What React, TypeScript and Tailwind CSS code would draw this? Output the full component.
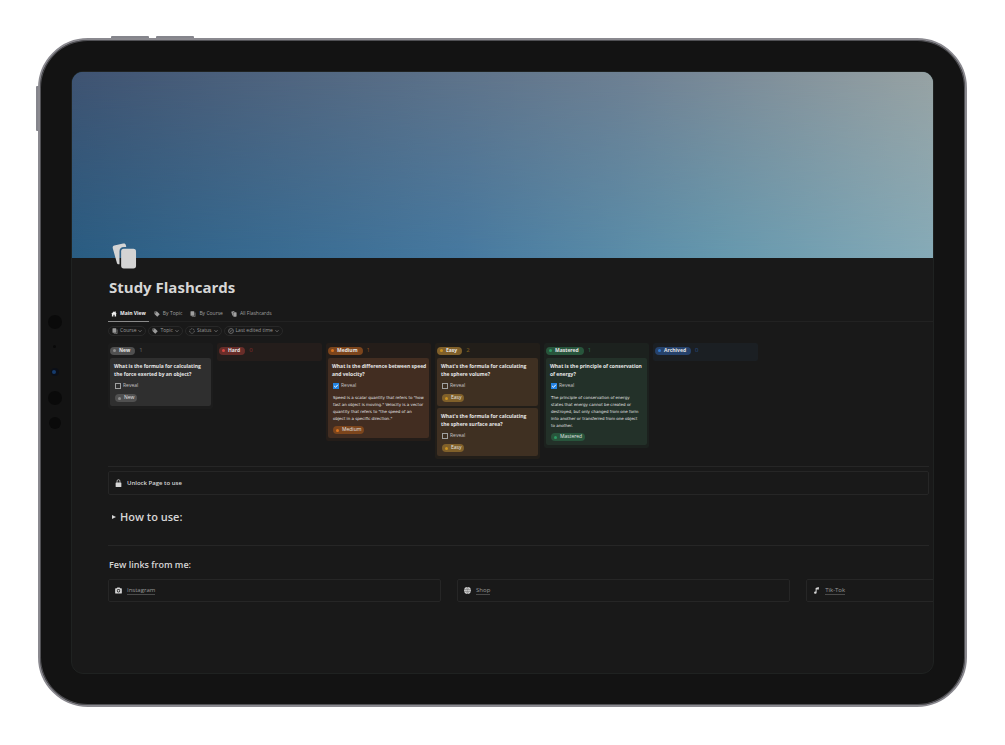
import { useState } from 'react';
import type { ReactNode } from 'react';

type IconProps = { className?: string };

function CardsIcon({ className }: IconProps) {
  return (
    <svg viewBox="0 0 26 28" className={className} fill="currentColor" aria-hidden="true">
      <path d="M2.400 2.600 11.600.6c1.500-.4 2.500.2 2.800 1.500l.4 2.100h-2.300C9.300 4.200 7.800 6 7.800 8.700V22c-1.700.4-2.600-.4-2.900-2.100L.8 5.500c-.3-1.500.2-2.500 1.600-2.900Z" />
      <rect x="9.500" y="6" width="15.500" height="20.500" rx="2.800" />
    </svg>
  );
}

function HomeIcon({ className }: IconProps) {
  return (
    <svg viewBox="0 0 12 12" className={className} fill="currentColor" aria-hidden="true">
      <path d="M6 .6.4 5.800h1.400v5.400h3V7.500h2.400v3.700h3V5.800h1.400L9.600 3.900V1.200H8v1.300Z" />
    </svg>
  );
}

function TagIcon({ className }: IconProps) {
  return (
    <svg viewBox="0 0 12 12" className={className} fill="currentColor" aria-hidden="true">
      <path fillRule="evenodd" d="M1 1h5l5.500 5.500-5 5L1 6Zm2.300 1.300a1 1 0 1 0 0 2 1 1 0 0 0 0-2Z" />
    </svg>
  );
}

function PagesIcon({ className }: IconProps) {
  return (
    <svg viewBox="0 0 12 12" className={className} fill="currentColor" aria-hidden="true">
      <rect x="1" y=".5" width="7.500" height="9" rx="1" />
      <path d="M9.500 3h1.200v8.500H3.500v-1.200h6Z" />
    </svg>
  );
}

function StatusIcon({ className }: IconProps) {
  return (
    <svg viewBox="0 0 12 12" className={className} fill="none" stroke="currentColor" strokeWidth="1.300" aria-hidden="true">
      <circle cx="6" cy="6" r="4.600" strokeDasharray="2.200 1.400" />
    </svg>
  );
}

function ClockIcon({ className }: IconProps) {
  return (
    <svg viewBox="0 0 12 12" className={className} fill="none" stroke="currentColor" strokeWidth="1.200" aria-hidden="true">
      <circle cx="6" cy="6" r="4.900" />
      <path d="M3.500 5.500 6 7l2.500-3" />
    </svg>
  );
}

function LockIcon({ className }: IconProps) {
  return (
    <svg viewBox="0 0 12 14" className={className} fill="currentColor" aria-hidden="true">
      <rect x="1" y="6" width="10" height="8" rx="1" />
      <path d="M3.500 6.500V3.600a2.500 2.500 0 0 1 5 0v2.900" fill="none" stroke="currentColor" strokeWidth="1.300" />
    </svg>
  );
}

function CameraIcon({ className }: IconProps) {
  return (
    <svg viewBox="0 0 12 12" className={className} fill="currentColor" aria-hidden="true">
      <path fillRule="evenodd" d="M4 .8h4l.8 1.400h1.900c.6 0 1 .4 1 1v7c0 .6-.4 1-1 1H1.300c-.6 0-1-.4-1-1v-7c0-.6.4-1 1-1h1.900ZM6 3.500a3 3 0 1 0 0 6 3 3 0 0 0 0-6Z" />
      <circle cx="6" cy="6.500" r="1.700" />
    </svg>
  );
}

function GlobeIcon({ className }: IconProps) {
  return (
    <svg viewBox="0 0 12 12" className={className} aria-hidden="true">
      <circle cx="6" cy="6" r="5.800" fill="currentColor" />
      <path d="M0 4.300h12M0 7.700h12M6 0v12M6 .3c-3.500 3-3.500 8.400 0 11.400 3.500-3 3.500-8.400 0-11.400Z" fill="none" stroke="#191919" strokeWidth=".4" />
    </svg>
  );
}

function NoteIcon({ className }: IconProps) {
  return (
    <svg viewBox="0 0 12 12" className={className} fill="currentColor" aria-hidden="true">
      <path d="M4.500 1.500 10 .2v3L6.200 4.200v5.500a2.200 2 0 1 1-1.700-2Z" />
      <circle cx="8.700" cy="3.500" r="1.300" />
    </svg>
  );
}

function ChevronIcon({ className }: IconProps) {
  return (
    <svg viewBox="0 0 8 8" className={className} fill="none" stroke="currentColor" strokeWidth="1.300" aria-hidden="true">
      <path d="m1 2.500 3 3 3-3" />
    </svg>
  );
}

type Tone = { column: string; card: string; pill: string; dot: string; count: string };

const tones: Record<string, Tone> = {
  New: { column: 'bg-[#1c1c1c]', card: 'bg-[#2f2f2f]', pill: 'bg-[#505050]', dot: 'bg-[#8c8c8c]', count: 'text-[#6a6a6a]' },
  Hard: { column: 'bg-[#241d1b]', card: 'bg-[#3e2825]', pill: 'bg-[#682d29]', dot: 'bg-[#d3453f]', count: 'text-[#8d2c29]' },
  Medium: { column: 'bg-[#241d19]', card: 'bg-[#422d21]', pill: 'bg-[#7c451c]', dot: 'bg-[#d9731f]', count: 'text-[#8c4f20]' },
  Easy: { column: 'bg-[#221e19]', card: 'bg-[#3f3022]', pill: 'bg-[#80602a]', dot: 'bg-[#ca9221]', count: 'text-[#886620]' },
  Mastered: { column: 'bg-[#1c211e]', card: 'bg-[#233129]', pill: 'bg-[#28553c]', dot: 'bg-[#2e9a64]', count: 'text-[#286c4a]' },
  Archived: { column: 'bg-[#1b1f23]', card: 'bg-[#1e2c3c]', pill: 'bg-[#26426b]', dot: 'bg-[#3279cc]', count: 'text-[#264f8a]' },
};

type Flashcard = { id: string; question: string; answer?: string };

const columns: { name: string; cards: Flashcard[] }[] = [
  { name: 'New', cards: [{ id: 'force', question: 'What is the formula for calculating\nthe force exerted by an object?' }] },
  { name: 'Hard', cards: [] },
  {
    name: 'Medium',
    cards: [
      {
        id: 'velocity',
        question: 'What is the difference between speed\nand velocity?',
        answer:
          'Speed is a scalar quantity that refers to "how\nfast an object is moving." Velocity is a vector\nquantity that refers to "the speed of an\nobject in a specific direction."',
      },
    ],
  },
  {
    name: 'Easy',
    cards: [
      { id: 'volume', question: "What's the formula for calculating\nthe sphere volume?" },
      { id: 'area', question: "What's the formula for calculating\nthe sphere surface area?" },
    ],
  },
  {
    name: 'Mastered',
    cards: [
      {
        id: 'energy',
        question: 'What is the principle of conservation\nof energy?',
        answer:
          'The principle of conservation of energy\nstates that energy cannot be created or\ndestroyed, but only changed from one form\ninto another or transferred from one object\nto another.',
      },
    ],
  },
  { name: 'Archived', cards: [] },
];

function StatusPill({ name, small }: { name: string; small?: boolean }) {
  const tone = tones[name];
  return (
    <span
      className={`inline-flex h-2 items-center gap-[3px] rounded-full pl-[3px] text-[5px] text-[#e4e4e4] ${tone.pill} ${
        small ? 'pr-[3px]' : 'pr-[5px] font-bold'
      }`}
    >
      <span className={`size-[3px] rounded-full ${tone.dot}`} />
      {name}
    </span>
  );
}

function FlashcardItem({ card, status }: { card: Flashcard; status: string }) {
  const [revealed, setRevealed] = useState(Boolean(card.answer));
  return (
    <article className={`flex flex-col items-start rounded-[2px] pt-1 pr-[2px] pb-1 pl-1 ${tones[status].card}`}>
      <h3 className="text-[5px] leading-[8px] font-bold whitespace-pre-line text-[#e6e6e6]">{card.question}</h3>
      <label className="mt-1 flex h-2 items-center gap-[2px] pl-px text-[5px] text-[#c4c4c4]">
        <span className="relative flex">
          <input
            type="checkbox"
            checked={revealed}
            onChange={(e) => setRevealed(e.target.checked)}
            className="peer size-[6px] appearance-none border border-[#a0a0a0] checked:border-[#2383e2] checked:bg-[#2383e2]"
          />
          <svg viewBox="0 0 6 6" className="pointer-events-none absolute inset-0 hidden size-[6px] peer-checked:block" fill="none" stroke="#fff" strokeWidth="1">
            <path d="m1.200 3 1.300 1.300L4.900 1.700" />
          </svg>
        </span>
        Reveal
      </label>
      {revealed && card.answer && (
        <p className="mt-1 pl-px font-['DejaVu_Sans',sans-serif] text-[4px] leading-[7px] whitespace-pre text-[#e6e6e6]">
          {card.answer}
        </p>
      )}
      <div className="mt-1 flex h-2 items-center pl-px">
        <StatusPill name={status} small />
      </div>
    </article>
  );
}

const tabs: { label: string; icon: ReactNode }[] = [
  { label: 'Main View', icon: <HomeIcon className="size-[6px]" /> },
  { label: 'By Topic', icon: <TagIcon className="size-[6px]" /> },
  { label: 'By Course', icon: <PagesIcon className="size-[6px]" /> },
  { label: 'All Flashcards', icon: <CardsIcon className="size-[6px]" /> },
];

const filters: { label: string; icon: ReactNode }[] = [
  { label: 'Course', icon: <PagesIcon className="size-[6px]" /> },
  { label: 'Topic', icon: <TagIcon className="size-[6px]" /> },
  { label: 'Status', icon: <StatusIcon className="size-[6px]" /> },
  { label: 'Last edited time', icon: <ClockIcon className="size-[6px]" /> },
];

const links: { label: string; icon: ReactNode }[] = [
  { label: 'Instagram', icon: <CameraIcon className="size-[7px]" /> },
  { label: 'Shop', icon: <GlobeIcon className="size-[7px]" /> },
  { label: 'Tik-Tok', icon: <NoteIcon className="size-[7px]" /> },
];

function Workspace() {
  const [active, setActive] = useState('Main View');
  return (
    <div className="overflow-hidden rounded-[12px] border border-[#1f2221] bg-[#191919] pb-[71px] text-[#d6d6d6]">
      <div className="bg-[linear-gradient(to_right,#2a5d83,#4679a0_45%,#6598ae_75%,#86abb8)]">
        <div className="h-[186px] bg-[linear-gradient(to_right,#3f5371,#5a6f87_40%,#6d7f92_64%,#97a2a3)] [mask-image:linear-gradient(to_bottom,black,transparent)]" />
      </div>
      <main className="relative -mt-[15px] pl-9">
        <CardsIcon className="ml-1 h-[27px] w-[25px] text-[#d4d4d4]" />
        <h1 className="mt-[6px] pl-px text-[15px] leading-[22px] font-bold">Study Flashcards</h1>

        <nav className="mt-[9px] flex h-[15px] gap-[2px] border-b border-[#222]">
          {tabs.map((tab) => (
            <button
              key={tab.label}
              type="button"
              onClick={() => setActive(tab.label)}
              className={`flex h-[15px] items-center gap-[3px] border-b px-[3px] text-[5px] ${
                active === tab.label ? 'border-[#8a8a8a] font-bold text-[#eee]' : 'border-transparent text-[#a0a0a0]'
              }`}
            >
              {tab.icon}
              {tab.label}
            </button>
          ))}
        </nav>

        <div className="mt-1 flex gap-[2px]">
          {filters.map((filter) => (
            <button
              key={filter.label}
              type="button"
              className="flex h-[10px] items-center gap-[2px] rounded-full border border-[#282828] px-[3px] text-[5px] text-[#9a9a9a]"
            >
              {filter.icon}
              {filter.label}
              <ChevronIcon className="size-[4px]" />
            </button>
          ))}
        </div>

        <div className="mt-[7px] flex items-start gap-1">
          {columns.map((column) => (
            <section key={column.name} className={`w-[105px] rounded-[2px] px-[2px] pb-[3px] ${tones[column.name].column}`}>
              <h2 className="flex h-[15px] items-center gap-1">
                <StatusPill name={column.name} />
                <span className={`text-[6px] ${tones[column.name].count}`}>{column.cards.length}</span>
              </h2>
              <div className="flex flex-col gap-[2px]">
                {column.cards.map((card) => (
                  <FlashcardItem key={card.id} card={card} status={column.name} />
                ))}
              </div>
            </section>
          ))}
        </div>

        <hr className="mt-[7px] mr-1 border-[#262626]" />
        <div className="mt-1 mr-1 flex h-6 items-center gap-[5px] rounded-[2px] border border-[#262626] px-[6px] text-[6px] font-semibold">
          <LockIcon className="h-2 w-[7px]" />
          Unlock Page to use
        </div>

        <details className="mt-[15px] pl-1">
          <summary className="flex cursor-pointer list-none items-center gap-1 text-[11px] leading-[14px] font-semibold">
            <svg viewBox="0 0 4 4" className="size-[4px]" fill="currentColor" aria-hidden="true">
              <path d="M0 0 4 2 0 4Z" />
            </svg>
            How to use:
          </summary>
        </details>

        <hr className="mt-[21px] mr-1 border-[#262626]" />
        <h2 className="mt-3 pl-px text-[9px] leading-[14px] font-semibold">Few links from me:</h2>
        <div className="mt-[7px] grid w-[125%] grid-cols-3 gap-4">
          {links.map((link) => (
            <div key={link.label} className="flex h-[23px] items-center gap-[5px] rounded-[2px] border border-[#262626] px-[6px] text-[6px]">
              {link.icon}
              <a href="#" className="border-b border-[#4a4a4a] leading-[8px] text-[#999]">
                {link.label}
              </a>
            </div>
          ))}
        </div>
      </main>
    </div>
  );
}

export default function App() {
  return (
    <div className="bg-white p-[38px] font-['Open_Sans','Noto_Sans',sans-serif]">
      <div className="relative">
        <div className="absolute -top-[2px] left-[73px] h-1 w-[38px] rounded-t-[1px] bg-[#85858c]" />
        <div className="absolute -top-[2px] left-[118px] h-1 w-[38px] rounded-t-[1px] bg-[#85858c]" />
        <div className="absolute top-[48px] -left-[2px] h-[45px] w-1 rounded-l-[1px] bg-[#85858c]" />
        <div className="relative rounded-[50px] border-2 border-[#8a898f] bg-[#131313] p-[31px] shadow-[inset_0_0_0_1px_#505054]">
          <div className="absolute top-[275px] left-[8px] size-[14px] rounded-full bg-[#0a0a0a]" />
          <div className="absolute top-[305px] left-[13px] size-[3px] rounded-full bg-[#090909]" />
          <div className="absolute top-[328px] left-[11px] flex size-[8px] items-center rounded-full bg-[#0b0f18] pl-px">
            <span className="size-[4px] rounded-full bg-[#163b6d]" />
          </div>
          <div className="absolute top-[351px] left-[8px] size-[14px] rounded-full bg-[#0a0a0a]" />
          <div className="absolute top-[377px] left-[9px] size-[12px] rounded-full bg-[#0a0a0a]" />
          <Workspace />
        </div>
      </div>
    </div>
  );
}
